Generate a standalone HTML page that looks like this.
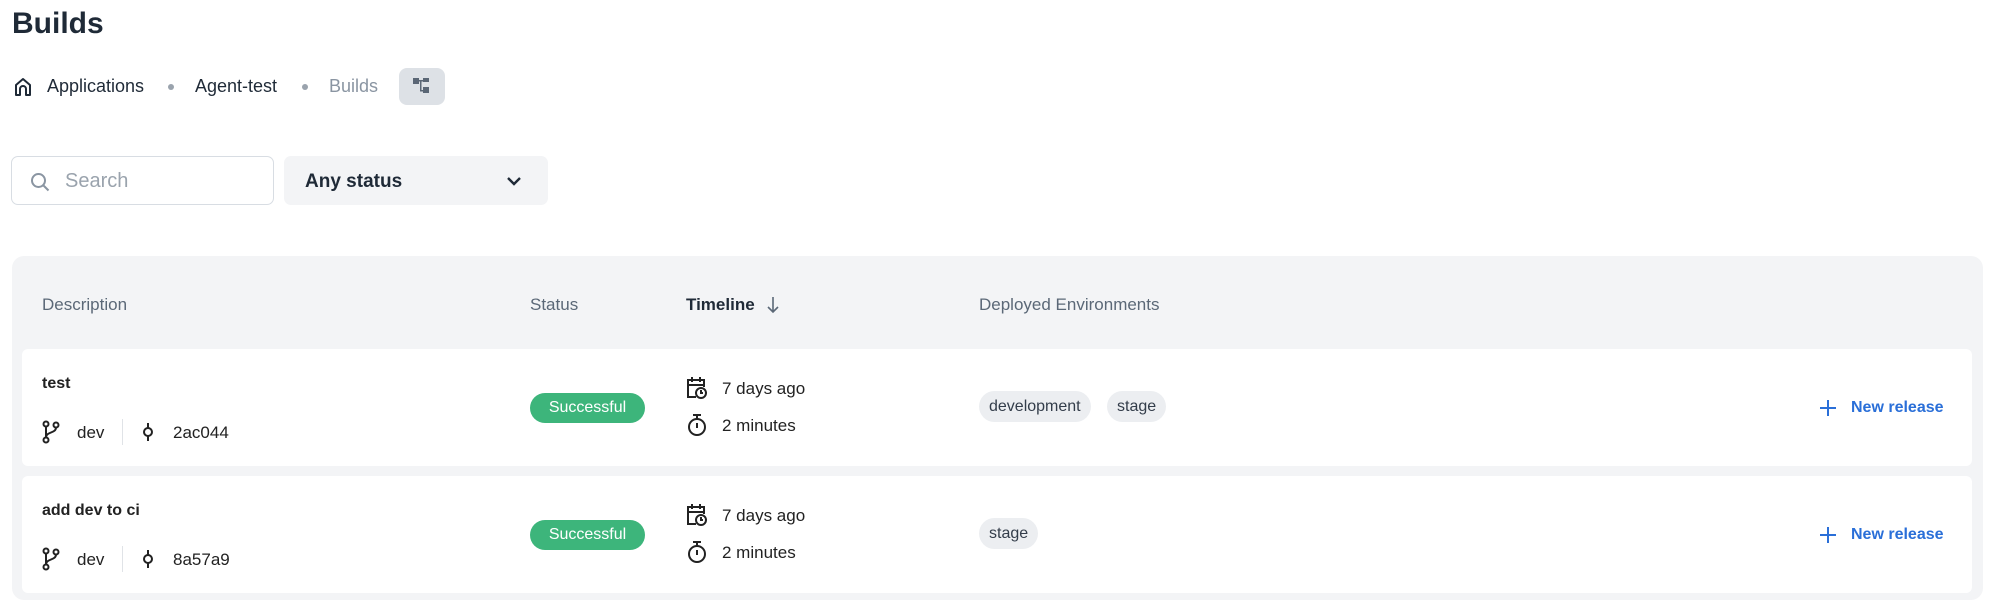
<!DOCTYPE html>
<html><head><meta charset="utf-8"><style>
*{box-sizing:border-box;margin:0;padding:0}
body{width:1999px;height:603px;background:#fff;font-family:"Liberation Sans",sans-serif;color:#1f2a37;position:relative;overflow:hidden}
.a{position:absolute;white-space:nowrap}
.h{font-size:17px;color:#5b6877}
.row{position:absolute;left:22px;width:1950px;height:117px;background:#fff;border-radius:6px}
.badge{position:absolute;left:508px;width:115px;height:30px;border-radius:15px;background:#3db57b;color:#fff;font-size:16px;text-align:center;line-height:30px}
.chip{position:absolute;height:31px;border-radius:16px;background:#eceef1;color:#333d4a;font-size:16px;line-height:31px;padding:0 10px}
.nr{position:absolute;left:1797px;color:#2a6fd8;font-size:16px;font-weight:bold}
.t{font-size:17px;color:#222}
</style></head><body>
<div class="a" style="left:12px;top:7px;font-size:30px;font-weight:bold;color:#1f2a37">Builds</div>

<svg class="a" style="left:13px;top:77px" width="20" height="20" viewBox="0 0 20 20" fill="none" stroke="#1f2a37" stroke-width="2" stroke-linejoin="round"><path d="M3 18V8l7-6 7 6v10h-4v-6a3 3 0 0 0-6 0v6z"/></svg>
<div class="a" style="left:47px;top:76px;font-size:18px">Applications</div>
<div class="a" style="left:168px;top:84px;width:6px;height:6px;border-radius:3px;background:#9aa3ad"></div>
<div class="a" style="left:195px;top:76px;font-size:18px">Agent-test</div>
<div class="a" style="left:302px;top:84px;width:6px;height:6px;border-radius:3px;background:#9aa3ad"></div>
<div class="a" style="left:329px;top:76px;font-size:18px;color:#8a95a2">Builds</div>
<div class="a" style="left:399px;top:68px;width:46px;height:37px;border-radius:8px;background:#dde1e6"></div>
<svg class="a" style="left:413px;top:77px" width="18" height="18" viewBox="0 0 18 18" fill="#5a6675"><rect x="0" y="1" width="6" height="6"/><rect x="10" y="1" width="6" height="4"/><rect x="10" y="10" width="6" height="6"/><path d="M6 3h4v1.5H8.5V13H10v1.5H7V4.5H6z"/></svg>

<div class="a" style="left:11px;top:156px;width:263px;height:49px;border:1.5px solid #d8dde3;border-radius:7px"></div>
<svg class="a" style="left:30px;top:172px" width="20" height="20" viewBox="0 0 20 20" fill="none" stroke="#8a95a2" stroke-width="2"><circle cx="8.5" cy="8.5" r="6.5"/><path d="M13.5 13.5l5 5"/></svg>
<div class="a" style="left:65px;top:170px;font-size:20px;color:#9aa3ad">Search</div>
<div class="a" style="left:284px;top:156px;width:264px;height:49px;background:#f3f4f6;border-radius:7px"></div>
<div class="a" style="left:305px;top:171px;font-size:19px;font-weight:bold;color:#1f2a37">Any status</div>
<svg class="a" style="left:506px;top:175px" width="16" height="12" viewBox="0 0 16 12" fill="none" stroke="#1f2a37" stroke-width="2.4"><path d="M2 3l6 6 6-6"/></svg>

<div class="a" style="left:12px;top:256px;width:1971px;height:344px;background:#f3f4f6;border-radius:12px"></div>
<div class="a h" style="left:42px;top:295px">Description</div>
<div class="a h" style="left:530px;top:295px">Status</div>
<div class="a h" style="left:686px;top:295px;color:#1f2a37;font-weight:bold">Timeline</div>
<svg class="a" style="left:766px;top:295px" width="14" height="20" viewBox="0 0 14 20" fill="none" stroke="#5b6877" stroke-width="1.6"><path d="M7 2v15M2 12l5 5 5-5"/></svg>
<div class="a h" style="left:979px;top:295px">Deployed Environments</div>

<div class="row" style="top:349px">
 <div class="a t" style="left:20px;top:26px;font-weight:bold;font-size:16px">test</div>
 <svg class="a" style="left:20px;top:71px" width="18" height="24" viewBox="0 0 18 24" fill="none" stroke="#222" stroke-width="2"><circle cx="4" cy="4" r="2.5"/><circle cx="4" cy="20" r="2.5"/><circle cx="14" cy="5" r="2.5"/><path d="M4 6.5v11M14 7.5c0 6-10 4-10 10"/></svg>
 <div class="a t" style="left:55px;top:74px">dev</div>
 <div class="a" style="left:100px;top:70px;width:1px;height:26px;background:#e0e3e7"></div>
 <svg class="a" style="left:120px;top:72px" width="12" height="22" viewBox="0 0 12 22" fill="none" stroke="#222" stroke-width="2"><circle cx="6" cy="11" r="4"/><path d="M6 2v5M6 15v5"/></svg>
 <div class="a t" style="left:151px;top:74px">2ac044</div>
 <div class="badge" style="top:44px">Successful</div>
 <svg class="a" style="left:664px;top:27px" width="22" height="24" viewBox="0 0 22 24" fill="none" stroke="#222" stroke-width="2"><path d="M10 21H2V4h16v7M2 9h16M6 1v5M14 1v5"/><circle cx="15" cy="17" r="5"/><path d="M15 14v3h2"/></svg>
 <div class="a t" style="left:700px;top:30px">7 days ago</div>
 <svg class="a" style="left:665px;top:64px" width="20" height="24" viewBox="0 0 20 24" fill="none" stroke="#222" stroke-width="2"><circle cx="10" cy="14" r="8"/><path d="M6 2h8M10 2v4M10 10v5"/></svg>
 <div class="a t" style="left:700px;top:67px">2 minutes</div>
 <div class="chip" style="left:957px;top:42px">development</div>
 <div class="chip" style="left:1085px;top:42px">stage</div>
 <svg class="a" style="left:1797px;top:50px" width="18" height="18" viewBox="0 0 18 18" stroke="#2a6fd8" stroke-width="2"><path d="M9 1v16M1 9h16"/></svg>
 <div class="nr" style="left:1829px;top:50px">New release</div>
</div>

<div class="row" style="top:476px">
 <div class="a t" style="left:20px;top:26px;font-weight:bold;font-size:16px">add dev to ci</div>
 <svg class="a" style="left:20px;top:71px" width="18" height="24" viewBox="0 0 18 24" fill="none" stroke="#222" stroke-width="2"><circle cx="4" cy="4" r="2.5"/><circle cx="4" cy="20" r="2.5"/><circle cx="14" cy="5" r="2.5"/><path d="M4 6.5v11M14 7.5c0 6-10 4-10 10"/></svg>
 <div class="a t" style="left:55px;top:74px">dev</div>
 <div class="a" style="left:100px;top:70px;width:1px;height:26px;background:#e0e3e7"></div>
 <svg class="a" style="left:120px;top:72px" width="12" height="22" viewBox="0 0 12 22" fill="none" stroke="#222" stroke-width="2"><circle cx="6" cy="11" r="4"/><path d="M6 2v5M6 15v5"/></svg>
 <div class="a t" style="left:151px;top:74px">8a57a9</div>
 <div class="badge" style="top:44px">Successful</div>
 <svg class="a" style="left:664px;top:27px" width="22" height="24" viewBox="0 0 22 24" fill="none" stroke="#222" stroke-width="2"><path d="M10 21H2V4h16v7M2 9h16M6 1v5M14 1v5"/><circle cx="15" cy="17" r="5"/><path d="M15 14v3h2"/></svg>
 <div class="a t" style="left:700px;top:30px">7 days ago</div>
 <svg class="a" style="left:665px;top:64px" width="20" height="24" viewBox="0 0 20 24" fill="none" stroke="#222" stroke-width="2"><circle cx="10" cy="14" r="8"/><path d="M6 2h8M10 2v4M10 10v5"/></svg>
 <div class="a t" style="left:700px;top:67px">2 minutes</div>
 <div class="chip" style="left:957px;top:42px">stage</div>
 <svg class="a" style="left:1797px;top:50px" width="18" height="18" viewBox="0 0 18 18" stroke="#2a6fd8" stroke-width="2"><path d="M9 1v16M1 9h16"/></svg>
 <div class="nr" style="left:1829px;top:50px">New release</div>
</div>
</body></html>
